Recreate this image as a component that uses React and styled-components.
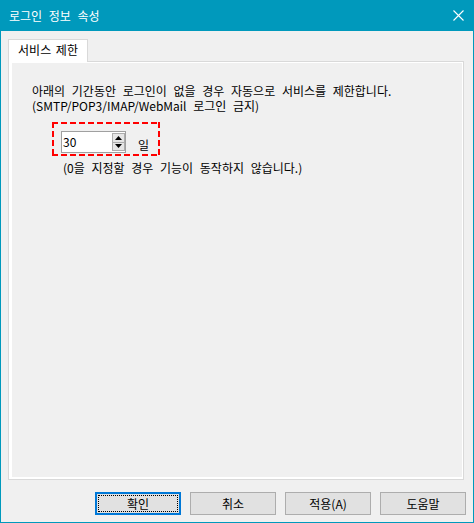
import React from "react";
import styled, { createGlobalStyle } from "styled-components";

const GlobalStyle = createGlobalStyle`
  html, body { margin: 0; padding: 0; background: #f0f0f0; }
  * { box-sizing: border-box; }
  body {
    font-family: "Noto Sans CJK KR", "Noto Sans", sans-serif;
    font-size: 12px;
    word-spacing: 4px;
    color: #000;
  }
`;

const Window = styled.div`
  width: 474px;
  height: 523px;
  border: 1px solid #0099bc;
  border-top: none;
  background: #f0f0f0;
  display: flex;
  flex-direction: column;
`;

const TitleBar = styled.div`
  height: 31px;
  flex: none;
  background: #0099bc;
  color: #fff;
  display: flex;
  align-items: center;
  justify-content: space-between;
  padding: 0 9px 0 8px;
  font-size: 12px;
  line-height: 16px;
`;

const CloseIcon = () => (
  <svg width="11" height="11" viewBox="0 0 11 11">
    <path d="M0.5 0.5 L10.5 10.5 M10.5 0.5 L0.5 10.5" stroke="#fff" strokeWidth="1.1" fill="none" />
  </svg>
);

const Body = styled.div`
  flex: 1;
  display: flex;
  flex-direction: column;
  padding: 8px 7px 7px 7px;
`;

const TabStrip = styled.div`
  display: flex;
  position: relative;
  z-index: 1;
  margin-bottom: -1px;
`;

const Tab = styled.div`
  width: 80px;
  height: 23px;
  background: #fff;
  border: 1px solid #d9d9d9;
  border-bottom: none;
  display: flex;
  align-items: center;
  justify-content: center;
  padding-bottom: 2px;
  line-height: 16px;
  word-spacing: 2px;
`;

const Panel = styled.div`
  height: 419px;
  margin-right: 2px;
  border: 1px solid #d9d9d9;
  background: #fff;
  padding: 1px 1px 2px 3px;
  display: flex;
`;

const Page = styled.div`
  flex: 1;
  background: #f0f0f0;
  padding: 20px 0 0 20px;
  display: flex;
  flex-direction: column;
  align-items: flex-start;
`;

const Line = styled.div`
  line-height: 15px;
  height: 15px;
  white-space: nowrap;
`;

const dashH = "repeating-linear-gradient(90deg, #ff0000 0 6px, transparent 6px 9px)";
const dashV = "repeating-linear-gradient(180deg, #ff0000 0 6px, transparent 6px 9px)";

const Highlight = styled.div`
  margin: 9px 0 0 20px;
  width: 108px;
  height: 34px;
  padding: 9px 0 0 9px;
  display: flex;
  align-items: flex-start;
  background:
    ${dashH} left top / 100% 2px no-repeat,
    ${dashH} left bottom / 100% 2px no-repeat,
    ${dashV} left top / 2px 100% no-repeat,
    ${dashV} right top / 2px 100% no-repeat;
`;

const SpinBox = styled.div`
  width: 65px;
  height: 22px;
  border: 1px solid #a0a0a0;
  background: #fff;
  display: flex;
  justify-content: space-between;
  padding: 1px 0 1px 1px;
`;

const SpinValue = styled.div`
  font-size: 12px;
  line-height: 14px;
  padding-top: 2px;
`;

const SpinButtons = styled.div`
  width: 13px;
  display: flex;
  flex-direction: column;
`;

const SpinButton = styled.div`
  flex: 1;
  background: #e6e6e6;
  border: 1px solid #adadad;
  display: flex;
  align-items: center;
  justify-content: center;
  & + & { border-top: none; }
`;

const Arrow = ({ up }) => (
  <svg width="7" height="4" viewBox="0 0 7 4">
    <path d={up ? "M3.5 0 L7 4 L0 4 Z" : "M0 0 L7 0 L3.5 4 Z"} fill="#000" />
  </svg>
);

const Unit = styled.span`
  margin-left: 12px;
  line-height: 16px;
  padding-top: 6px;
`;

const Caption = styled(Line)`
  margin: 4px 0 0 31px;
`;

const ButtonRow = styled.div`
  margin-top: 12px;
  display: flex;
  justify-content: flex-end;
  gap: 9px;
`;

const Button = styled.button`
  width: 86px;
  height: 23px;
  padding: 0;
  font-family: inherit;
  font-size: 12px;
  line-height: 16px;
  word-spacing: 4px;
  color: #000;
  background: #e1e1e1;
  border: ${(p) => (p.$default ? "2px solid #0078d7" : "1px solid #adadad")};
  position: relative;
  &::after {
    content: "";
    position: absolute;
    inset: 1px;
    border: 1px dotted #000;
    display: ${(p) => (p.$default ? "block" : "none")};
  }
`;

export default function App() {
  return (
    <>
      <GlobalStyle />
      <Window>
        <TitleBar>
          <span>로그인 정보 속성</span>
          <CloseIcon />
        </TitleBar>
        <Body>
          <TabStrip>
            <Tab>서비스 제한</Tab>
          </TabStrip>
          <Panel>
            <Page>
              <Line>아래의 기간동안 로그인이 없을 경우 자동으로 서비스를 제한합니다.</Line>
              <Line>(SMTP/POP3/IMAP/WebMail 로그인 금지)</Line>
              <Highlight>
                <SpinBox>
                  <SpinValue>30</SpinValue>
                  <SpinButtons>
                    <SpinButton><Arrow up /></SpinButton>
                    <SpinButton><Arrow /></SpinButton>
                  </SpinButtons>
                </SpinBox>
                <Unit>일</Unit>
              </Highlight>
              <Caption>(0을 지정할 경우 기능이 동작하지 않습니다.)</Caption>
            </Page>
          </Panel>
          <ButtonRow>
            <Button $default>확인</Button>
            <Button>취소</Button>
            <Button>적용(A)</Button>
            <Button>도움말</Button>
          </ButtonRow>
        </Body>
      </Window>
    </>
  );
}
